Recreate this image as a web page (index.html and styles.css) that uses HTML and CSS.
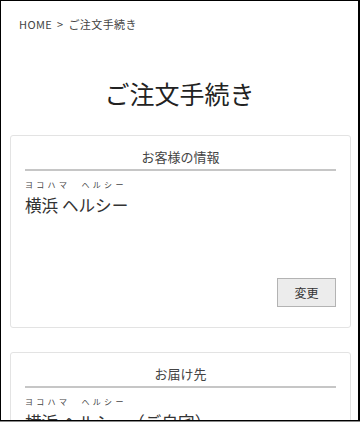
FILE: index.html
```html
<!DOCTYPE html>
<html lang="ja">
<head>
<meta charset="utf-8">
<title>ご注文手続き</title>
<link rel="stylesheet" href="styles.css">
</head>
<body>
<div class="frame">
  <nav class="breadcrumb">HOME <span class="sep">&gt;</span> ご注文手続き</nav>
  <h1 class="title">ご注文手続き</h1>
  <section class="card">
    <h2 class="card-title">お客様の情報</h2>
    <div class="kana">ヨコハマ　ヘルシー</div>
    <div class="name">横浜 ヘルシー</div>
    <div class="actions"><button class="btn">変更</button></div>
  </section>
  <section class="card">
    <h2 class="card-title">お届け先</h2>
    <div class="kana">ヨコハマ　ヘルシー</div>
    <div class="name">横浜 ヘルシー（ご自宅）</div>
  </section>
</div>
</body>
</html>
```
FILE: styles.css
```css
html, body {
  margin: 0;
  padding: 0;
  background: #8a8a8a;
}
.frame {
  box-sizing: border-box;
  width: 360px;
  height: 421px;
  overflow: hidden;
  background: #fff;
  border: 1px solid #000;
  border-right-width: 2px;
  font-family: "Noto Sans CJK JP", "Noto Sans", sans-serif;
  color: #333;
}
.breadcrumb {
  padding: 15px 18px 0;
  font-size: 11px;
  line-height: 16px;
  color: #444;
  letter-spacing: 0.4px;
}
.sep {
  margin: 0 2px;
}
.title {
  margin: 43px 0 24px;
  text-align: center;
  font-size: 25px;
  line-height: 36px;
  font-weight: 400;
  color: #222;
}
.card {
  margin: 0 7px 24px 9px;
  border: 1px solid #e3e3e3;
  border-radius: 3px;
  padding: 12px 14px 20px;
}
.card-title {
  margin: 0;
  padding-bottom: 3px;
  border-bottom: 2px solid #c6c6c6;
  text-align: center;
  font-size: 13px;
  line-height: 18px;
  font-weight: 400;
  color: #444;
}
.kana {
  margin-top: 8px;
  font-size: 8px;
  line-height: 12px;
  letter-spacing: 3.3px;
  color: #444;
}
.name {
  margin-top: 2px;
  font-size: 16.6px;
  line-height: 24px;
  color: #333;
}
.actions {
  display: flex;
  justify-content: flex-end;
  margin-top: 61px;
}
.btn {
  box-sizing: border-box;
  width: 59px;
  height: 29px;
  padding: 0;
  border: 1px solid #b3b3b3;
  background: #ececec;
  font-family: "Noto Sans CJK JP", sans-serif;
  font-size: 12px;
  color: #333;
}
```
